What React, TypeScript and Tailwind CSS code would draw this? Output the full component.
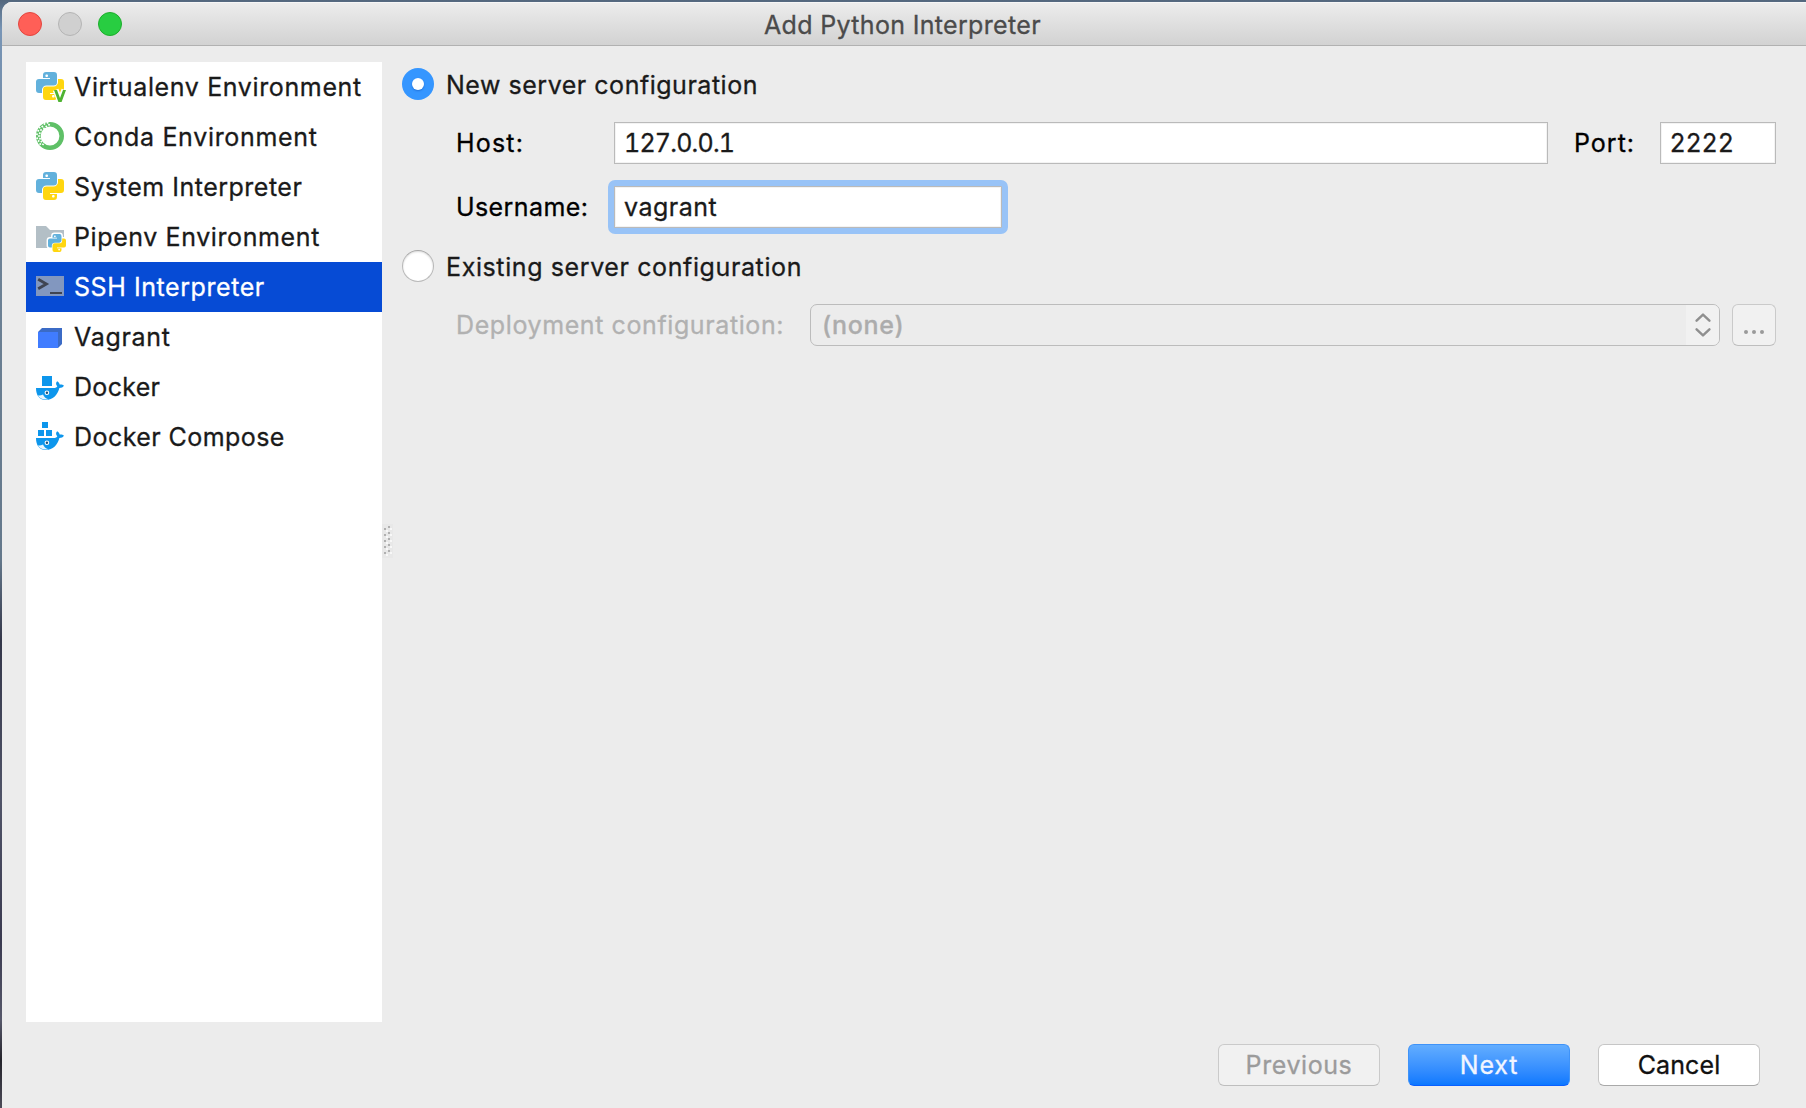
import React from "react";

const BLUE_SNAKE =
  "M10 0H18A3 3 0 0 1 21 3V10.2A3.3 3.3 0 0 1 17.7 13.5H10.5A4.5 4.5 0 0 0 6 18V21H3A3 3 0 0 1 0 18V10A3 3 0 0 1 3 7H14V6H7V3A3 3 0 0 1 10 0Z";

function Snakes() {
  return (
    <>
      <path d={BLUE_SNAKE} fill="#62b1dc" />
      <rect x="9.4" y="2.4" width="2.6" height="2.6" rx="1" fill="#fff" />
      <g transform="rotate(180 14 14)">
        <path d={BLUE_SNAKE} fill="#ffd60f" />
        <rect x="9.4" y="2.4" width="2.6" height="2.6" rx="1" fill="#fff" />
      </g>
    </>
  );
}

function Icon({ children }: { children: React.ReactNode }) {
  return (
    <svg className="-mt-0.5 size-7 shrink-0 overflow-visible" viewBox="0 0 28 28">
      {children}
    </svg>
  );
}

const VirtualenvIcon = () => (
  <Icon>
    <Snakes />
    <path d="M19.6 17.8L24 28.6L28.4 17.8" fill="none" stroke="#fff" strokeWidth="6" />
    <path d="M18 18H21L24 26L27 18H30L25.6 30H22.4Z" fill="#4fb332" />
  </Icon>
);

const SPECKS: [number, number][] = [
  [11.5, 0.8], [8.5, 2], [10.3, 4.4], [13, 2.8], [6.3, 4.5], [8, 6.4], [3.6, 5.6], [5, 8], [2.2, 8.8],
  [3.8, 11.2], [1, 12.2], [3, 14], [1.2, 16.2], [4, 16.8], [2.6, 19], [5.4, 19.6], [4.2, 22], [7, 22.4],
];

const CondaIcon = () => (
  <Icon>
    <circle cx="14" cy="14" r="11.7" fill="none" stroke="#5fc067" strokeWidth="4.6" />
    {SPECKS.map(([x, y]) => (
      <rect key={`${x}-${y}`} x={x - 0.85} y={y - 0.85} width="1.7" height="1.7" fill="#fff" transform={`rotate(35 ${x} ${y})`} />
    ))}
  </Icon>
);

const PythonIcon = () => (
  <Icon>
    <Snakes />
  </Icon>
);

const PipenvIcon = () => (
  <Icon>
    <path d="M0 4H10L14 8H28V26H0Z" fill="#b3bfc6" />
    <g transform="translate(12 12) scale(.643)">
      <path d={BLUE_SNAKE} fill="#fff" stroke="#fff" strokeWidth="4.4" />
      <path d={BLUE_SNAKE} fill="#fff" stroke="#fff" strokeWidth="4.4" transform="rotate(180 14 14)" />
      <Snakes />
    </g>
  </Icon>
);

const TerminalIcon = () => (
  <Icon>
    <rect y="4" width="28" height="20" fill="#8297bf" />
    <path d="M2.2 7.2L10.4 12L2.2 16.8" fill="none" stroke="#3f4452" strokeWidth="2.8" />
    <rect x="14" y="20" width="12" height="2" fill="#3f4452" />
  </Icon>
);

const VagrantIcon = () => (
  <Icon>
    <path d="M2 10L6 6H26V22L22 26Z" fill="#3b6bc6" />
    <rect x="2" y="10" width="20" height="16" fill="#407cff" />
  </Icon>
);

const Whale = () => (
  <>
    <path
      d="M0 16H17.5C19.5 16 21 15.2 21.3 14.2C19.6 12.4 19.8 10.4 21.2 9.2C22.8 10 23.4 11.2 23.6 12.5C25.2 12.2 27 12.6 28 13.6C27 15.4 25.4 16 23.4 16.1C21.2 23.6 17 28 10 28C3.6 28 0 23.6 0 16Z"
      fill="#0d96ec"
    />
    <path d="M1.8 23.4C3.6 23.6 5.4 23.4 7 22.6C8 25 9.6 26.4 12.4 27.3C7.6 28 3.8 26.6 1.8 23.4Z" fill="#e8f5fd" />
    <circle cx="10.9" cy="20.8" r="2.3" fill="#fff" />
    <circle cx="10.9" cy="20.8" r="1.2" fill="#1b4f78" />
  </>
);

const DockerIcon = () => (
  <Icon>
    <rect x="6" y="4" width="10" height="10" fill="#0d96ec" />
    <Whale />
  </Icon>
);

const ComposeIcon = () => (
  <Icon>
    <rect x="6" y="0" width="6" height="6" fill="#0d96ec" />
    <rect x="2" y="8" width="6" height="6" fill="#0d96ec" />
    <rect x="10" y="8" width="6" height="6" fill="#0d96ec" />
    <Whale />
  </Icon>
);

const ENTRIES = [
  { label: "Virtualenv Environment", icon: VirtualenvIcon, track: "tracking-[0.63px]" },
  { label: "Conda Environment", icon: CondaIcon, track: "tracking-[0.67px]" },
  { label: "System Interpreter", icon: PythonIcon, track: "tracking-[0.5px]" },
  { label: "Pipenv Environment", icon: PipenvIcon, track: "tracking-[0.6px]" },
  { label: "SSH Interpreter", icon: TerminalIcon, track: "tracking-[0.57px]", selected: true },
  { label: "Vagrant", icon: VagrantIcon, track: "tracking-[0.7px]" },
  { label: "Docker", icon: DockerIcon, track: "tracking-[0.3px]" },
  { label: "Docker Compose", icon: ComposeIcon, track: "tracking-[0.44px]" },
];

function Sidebar() {
  return (
    <ul className="h-[960px] w-[356px] shrink-0 bg-white">
      {ENTRIES.map(({ label, icon: Glyph, track, selected }) => (
        <li
          key={label}
          className={`flex h-[50px] items-center gap-2.5 pl-2.5 ${track} ${selected ? "bg-[#064bd5] text-white" : "text-[#1a1a1a]"}`}
        >
          <Glyph />
          <span className="whitespace-nowrap">{label}</span>
        </li>
      ))}
    </ul>
  );
}

function Grip() {
  return (
    <div className="flex w-5 shrink-0 items-center">
      <svg className="-mt-0.5 h-[34px] w-3" viewBox="0 0 12 34">
        <rect width="11" height="34" fill="#e8e8e8" />
        {[0, 1, 2, 3, 4].map((i) => (
          <g key={i} transform={`translate(0 ${i * 6})`}>
            <rect x="2" y="4" width="2" height="2" fill="#b0b0b0" />
            <rect x="4" y="6" width="2" height="2" fill="#f8f8f8" />
            <rect x="6" y="2" width="2" height="2" fill="#b0b0b0" />
            <rect x="8" y="4" width="2" height="2" fill="#f8f8f8" />
          </g>
        ))}
      </svg>
    </div>
  );
}

const FIELD = "flex h-[42px] items-center border border-[#bababa] bg-white pl-[9px] whitespace-nowrap text-[#1a1a1a] shadow-[inset_0_0_0_1px_#f3f3f3]";

function ServerForm() {
  return (
    <div className="flex-1 pt-1.5 pr-[30px] text-black">
      <div className="flex h-8 items-center">
        <span className="flex size-8 items-center justify-center rounded-full bg-[#3596ff]">
          <span className="size-3 rounded-full bg-white shadow-[0_1px_2px_rgba(0,60,160,.4)]" />
        </span>
        <span className="pt-0.5 pl-3 tracking-[0.52px] text-[#1a1a1a]">New server configuration</span>
      </div>

      <div className="mt-[22px] flex h-[42px] items-center pl-[54px]">
        <span className="w-[158px] tracking-[1.2px]">Host:</span>
        <div className={`${FIELD} flex-1 tabular-nums tracking-[-0.8px]`}>127.0.0.1</div>
        <span className="w-28 pl-[26px] tracking-[1px]">Port:</span>
        <div className={`${FIELD} w-[116px] tracking-[0.8px]`}>2222</div>
      </div>

      <div className="mt-[22px] flex h-[42px] items-center pl-[54px]">
        <span className="w-[158px] tracking-[0.4px]">Username:</span>
        <div className="w-[388px] rounded-[1px] outline-[6px] outline-[#98c3f7]">
          <div className={`${FIELD} tracking-[0.5px]`}>vagrant</div>
        </div>
      </div>

      <div className="mt-[22px] flex h-8 items-center">
        <span className="size-8 rounded-full border border-[#b9b9b9] border-t-[#a6a6a6] bg-white shadow-[inset_0_1px_2px_rgba(0,0,0,.15)]" />
        <span className="pt-0.5 pl-3 tracking-[0.61px] text-[#1a1a1a]">Existing server configuration</span>
      </div>

      <div className="mt-[22px] flex h-[42px] items-center pl-[54px]">
        <span className="w-[354px] tracking-[0.6px] whitespace-nowrap text-[#b1b1b1]">Deployment configuration:</span>
        <div className="flex h-full flex-1 items-stretch overflow-hidden rounded-[7px] border border-[#bcbcbc]">
          <span className="flex flex-1 items-center pl-[11px] font-medium tracking-[0.7px] text-[#acacac]">(none)</span>
          <span className="flex w-[33px] items-center justify-center bg-[#f1f1f1]">
            <svg className="h-6 w-4" viewBox="0 0 16 24" fill="none" stroke="#8f8f8f" strokeWidth="2.4" strokeLinecap="round" strokeLinejoin="round">
              <path d="M1.6 7.7L8 1.6L14.4 7.7M1.6 16.3L8 22.4L14.4 16.3" />
            </svg>
          </span>
        </div>
        <div className="ml-3 flex h-full w-11 items-end justify-center gap-1 rounded-[6px] border border-[#cacaca] border-b-[#bebebe] bg-[#f1f1f1] pb-[11px]">
          <i className="size-1 rounded-full bg-[#9a9a9a]" />
          <i className="size-1 rounded-full bg-[#9a9a9a]" />
          <i className="size-1 rounded-full bg-[#9a9a9a]" />
        </div>
      </div>
    </div>
  );
}

const BUTTON = "flex h-[42px] w-[162px] items-center justify-center rounded-[6px] border";

export default function App() {
  return (
    <div className="h-[1108px] w-[1806px] overflow-hidden bg-[linear-gradient(to_bottom,#53677d_0,#7895b6_30px,#6d8296_260px,#64788b_560px,#34374a_640px,#505468_800px,#3a3a50_940px,#56586a_1020px,#25242c_1060px,#4c4b58_1108px)] pt-0.5 pl-0.5 font-['Inter',sans-serif] text-[25px] leading-[30px] [-webkit-text-stroke:0.3px]">
      <div className="h-full w-full overflow-hidden rounded-tl-[10px] bg-[#ececec]">
        <header className="flex h-11 items-center border-b border-[#b1b1b1] bg-linear-to-b from-[#ededed] to-[#d2d2d2] pl-4 shadow-[inset_0_1px_0_#f6f6f6]">
          <div className="flex w-[746px] gap-4">
            <span className="size-6 rounded-full border border-[#e2463f] bg-[#ff5f57]" />
            <span className="size-6 rounded-full border border-[#b4b4b4] bg-[#d0d0d0]" />
            <span className="size-6 rounded-full border border-[#1dad2b] bg-[#28cd41]" />
          </div>
          <h1 className="pt-0.5 tracking-[0.33px] whitespace-nowrap text-[#4b4b4b]">Add Python Interpreter</h1>
        </header>
        <main className="flex pt-4 pl-6">
          <Sidebar />
          <Grip />
          <ServerForm />
        </main>
        <footer className="mt-[22px] flex justify-end gap-7 pr-[46px]">
          <div className={`${BUTTON} border-[#cacaca] border-b-[#bebebe] bg-[#f1f1f1] tracking-[0.58px] text-[#9b9b9b]`}>Previous</div>
          <div className={`${BUTTON} border-[#3f93f8] border-b-[#0a5fff] bg-linear-to-b from-[#62adff] to-[#0a78ff] tracking-[0.8px] text-[#f2f5ff]`}>Next</div>
          <div className={`${BUTTON} border-[#c6c6c6] border-b-[#a9a9a9] bg-white tracking-[0.1px] text-[#111]`}>Cancel</div>
        </footer>
      </div>
    </div>
  );
}
